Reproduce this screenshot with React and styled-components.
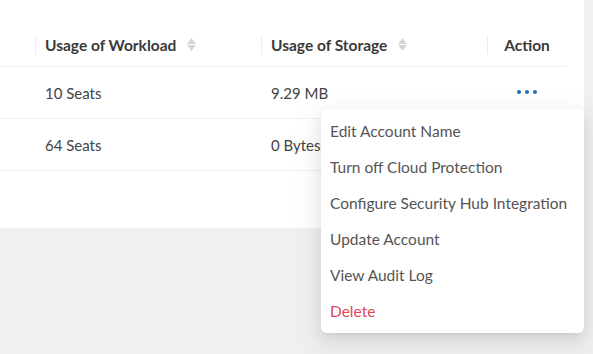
import React from "react";
import styled, { createGlobalStyle } from "styled-components";

const Global = createGlobalStyle`
  html, body { margin: 0; padding: 0; background: #f0f0f0; }
  body { font-family: Lato, "Open Sans", sans-serif; width: 593px; height: 354px; overflow: hidden; }
`;

const Page = styled.div`
  position: relative;
  width: 593px;
  height: 354px;
  background: #f0f0f0;
`;

const Card = styled.div`
  width: 584px;
  height: 228px;
  background: #fff;
  padding-top: 23px;
  box-sizing: border-box;
`;

const Table = styled.div`
  width: 567px;
`;

const Row = styled.div`
  display: grid;
  grid-template-columns: 35px 226px 226px 80px;
  height: ${(p) => p.$h}px;
  align-items: center;
  border-bottom: 1px solid #f0f0f0;
  box-sizing: border-box;
`;

const HeadCell = styled.div`
  position: relative;
  display: flex;
  align-items: center;
  justify-content: ${(p) => (p.$center ? "center" : "flex-start")};
  padding-left: ${(p) => (p.$center ? 0 : 10)}px;
  font-size: 15.5px;
  font-weight: 700;
  color: #3a3a3a;
  height: 100%;
  &::before {
    content: "";
    display: ${(p) => (p.$sep ? "block" : "none")};
    position: absolute;
    left: 0;
    top: 50%;
    transform: translateY(-50%);
    width: 1px;
    height: 18px;
    background: #ececec;
  }
`;

const Sort = styled.span`
  display: inline-flex;
  flex-direction: column;
  margin-left: 11px;
  gap: 1px;
`;

const Cell = styled.div`
  padding-left: ${(p) => (p.$center ? 0 : 10)}px;
  font-size: 15px;
  color: #444;
  display: flex;
  justify-content: ${(p) => (p.$center ? "center" : "flex-start")};
  align-items: center;
`;

const Dots = styled.div`
  display: flex;
  gap: 4px;
  margin-top: -2px;
  span {
    width: 4px;
    height: 4px;
    border-radius: 50%;
    background: #2270b8;
  }
`;

const Menu = styled.ul`
  position: absolute;
  left: 321px;
  top: 109px;
  width: 263px;
  margin: 0;
  padding: 4px 0;
  list-style: none;
  background: #fff;
  border-radius: 6px;
  box-shadow: 0 3px 6px -4px rgba(0, 0, 0, 0.12), 0 6px 16px 0 rgba(0, 0, 0, 0.08),
    0 9px 28px 8px rgba(0, 0, 0, 0.05);
`;

const Item = styled.li`
  height: 36px;
  display: flex;
  align-items: center;
  padding: 0 9px;
  font-size: 15.5px;
  color: ${(p) => (p.$danger ? "#e0485c" : "#555")};
  white-space: nowrap;
`;

function SortIcon() {
  return (
    <Sort>
      <svg width="9" height="6" viewBox="0 0 9 6"><path d="M4.5 0L9 6H0z" fill="#d6d6d6" /></svg>
      <svg width="9" height="6" viewBox="0 0 9 6"><path d="M0 0h9L4.5 6z" fill="#d6d6d6" /></svg>
    </Sort>
  );
}

const rows = [
  { w: "10 Seats", s: "9.29 MB", dots: true },
  { w: "64 Seats", s: "0 Bytes" },
];

const menu = [
  "Edit Account Name",
  "Turn off Cloud Protection",
  "Configure Security Hub Integration",
  "Update Account",
  "View Audit Log",
];

export default function App() {
  return (
    <Page>
      <Global />
      <Card>
        <Table>
          <Row $h={44}>
            <HeadCell />
            <HeadCell $sep>
              Usage of Workload
              <SortIcon />
            </HeadCell>
            <HeadCell $sep>
              Usage of Storage
              <SortIcon />
            </HeadCell>
            <HeadCell $sep $center>Action</HeadCell>
          </Row>
          {rows.map((r, i) => (
            <Row key={i} $h={52}>
              <Cell />
              <Cell>{r.w}</Cell>
              <Cell>{r.s}</Cell>
              <Cell $center>
                {r.dots && (
                  <Dots>
                    <span />
                    <span />
                    <span />
                  </Dots>
                )}
              </Cell>
            </Row>
          ))}
        </Table>
      </Card>
      <Menu>
        {menu.map((m) => (
          <Item key={m}>{m}</Item>
        ))}
        <Item $danger>Delete</Item>
      </Menu>
    </Page>
  );
}
